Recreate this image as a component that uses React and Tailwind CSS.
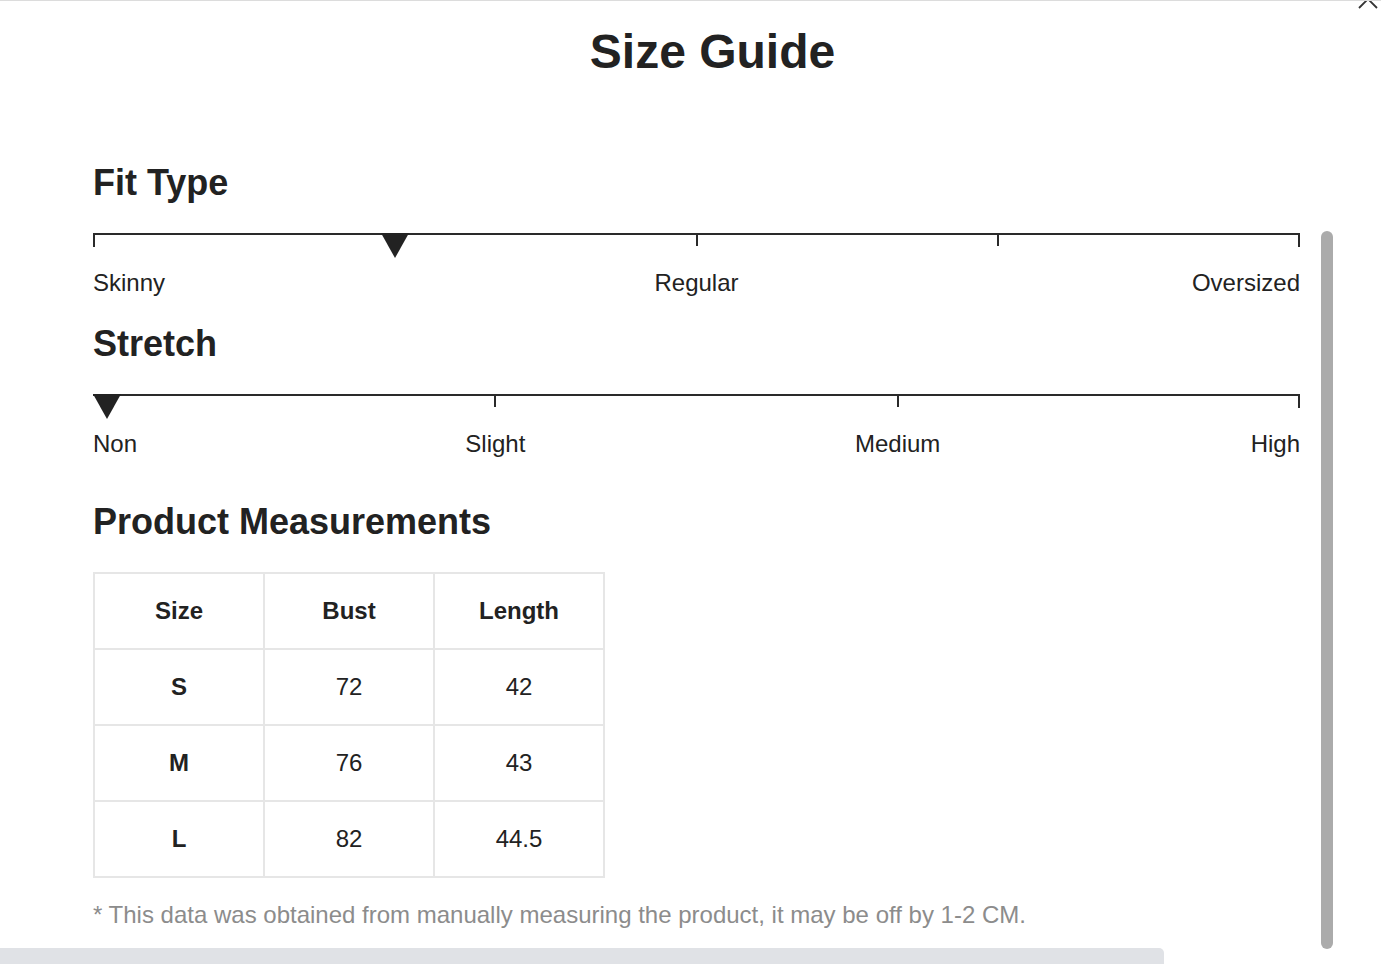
import React from 'react';

const FONT = { fontFamily: '"Liberation Sans", Arial, sans-serif' };

const Marker = ({ className }) => (
  <svg className={`absolute top-0 ${className}`} width="28" height="25" viewBox="0 0 28 25">
    <polygon points="0,0 28,0 14,25" fill="#222" />
  </svg>
);

const Scale = ({ children, leftTick = true }) => (
  <div className="relative h-[26px]">
    <div className="absolute left-0 right-0 top-0 h-[2px] bg-[#2a2a2a]" />
    {leftTick && <div className="absolute left-0 top-0 h-[14px] w-[2px] bg-[#2a2a2a]" />}
    <div className="absolute right-0 top-0 h-[14px] w-[2px] bg-[#2a2a2a]" />
    {children}
  </div>
);

const Tick = ({ className }) => (
  <div className={`absolute top-0 h-[13px] w-[2px] -translate-x-1/2 bg-[#2a2a2a] ${className}`} />
);

const rows = [
  { size: 'S', bust: '72', length: '42' },
  { size: 'M', bust: '76', length: '43' },
  { size: 'L', bust: '82', length: '44.5' },
];

export default function App() {
  return (
    <div className="relative h-[964px] w-full overflow-hidden border-t border-[#dcdcdc] bg-white text-[#222]" style={FONT}>
      {/* close button, mostly cut off at the top */}
      <svg className="absolute left-[1358px] top-[-12px]" width="20" height="20" viewBox="0 0 20 20">
        <path d="M1 1L19 19M19 1L1 19" stroke="#333" strokeWidth="1.8" fill="none" />
      </svg>

      <div className="w-[1300px] pl-[93px] pt-[27px]">
        <h1 className="pl-[32px] text-center text-[48px] font-bold leading-none">Size Guide</h1>

        {/* Fit Type */}
        <h2 className="mt-[89px] text-[36px] font-bold leading-none">Fit Type</h2>
        <div className="mt-[32px]">
          <Scale>
            <Tick className="left-1/2" />
            <Tick className="left-3/4" />
            <Marker className="left-[calc(25%-14px)]" />
          </Scale>
        </div>
        <div className="relative mt-[12px] h-[24px] text-[24px] leading-none">
          <span className="absolute left-0 top-0">Skinny</span>
          <span className="absolute left-1/2 top-0 -translate-x-1/2">Regular</span>
          <span className="absolute right-0 top-0">Oversized</span>
        </div>

        {/* Stretch */}
        <h2 className="mt-[31px] text-[36px] font-bold leading-none">Stretch</h2>
        <div className="mt-[32px]">
          <Scale leftTick={false}>
            <Tick className="left-1/3" />
            <Tick className="left-2/3" />
            <Marker className="left-0" />
          </Scale>
        </div>
        <div className="relative mt-[12px] h-[24px] text-[24px] leading-none">
          <span className="absolute left-0 top-0">Non</span>
          <span className="absolute left-1/3 top-0 -translate-x-1/2">Slight</span>
          <span className="absolute left-2/3 top-0 -translate-x-1/2">Medium</span>
          <span className="absolute right-0 top-0">High</span>
        </div>

        {/* Measurements */}
        <h2 className="mt-[48px] text-[36px] font-bold leading-none">Product Measurements</h2>
        <table className="mt-[32px] w-[512px] table-fixed border-collapse text-[24px]">
          <thead>
            <tr className="h-[76px]">
              {['Size', 'Bust', 'Length'].map((h) => (
                <th key={h} className="border-2 border-[#e6e6e6] text-center font-bold">
                  {h}
                </th>
              ))}
            </tr>
          </thead>
          <tbody>
            {rows.map((r) => (
              <tr key={r.size} className="h-[76px]">
                <td className="border-2 border-[#e6e6e6] text-center font-bold">{r.size}</td>
                <td className="border-2 border-[#e6e6e6] text-center">{r.bust}</td>
                <td className="border-2 border-[#e6e6e6] text-center">{r.length}</td>
              </tr>
            ))}
          </tbody>
        </table>

        <p className="mt-[25px] whitespace-nowrap text-[24px] leading-none text-[#8c8c8c]">
          * This data was obtained from manually measuring the product, it may be off by 1-2 CM.
        </p>
      </div>

      {/* scrollbars */}
      <div className="absolute left-[1321px] top-[230px] h-[718px] w-[12px] rounded-full bg-[#ababab]" />
      <div className="absolute bottom-0 left-0 h-[16px] w-[1164px] rounded-tr-[5px] bg-[#e0e2e6]" />
    </div>
  );
}
